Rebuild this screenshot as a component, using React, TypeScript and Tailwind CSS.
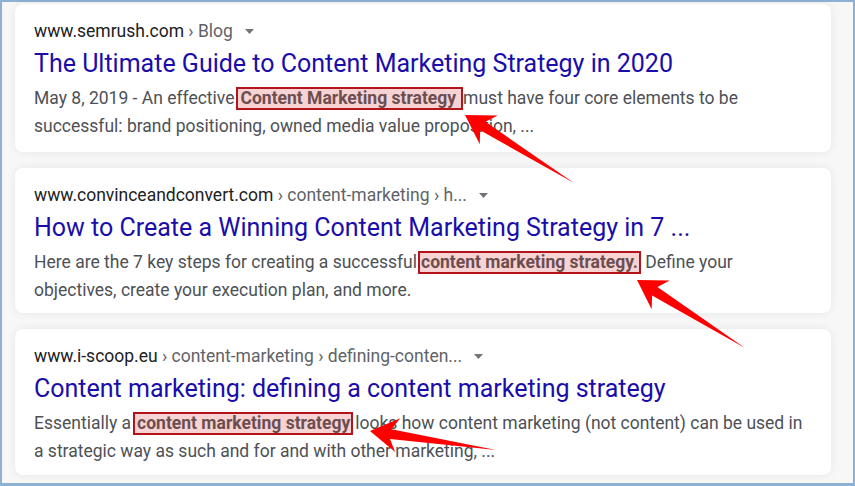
import React from "react";

type Pt = [number, number];

interface Result {
  domain: string;
  crumbs: string;
  title: string;
  before: string;
  mark: string;
  after: string;
  line2: string;
  height: string;
  markBox: string;
}

const results: Result[] = [
  {
    domain: "www.semrush.com",
    crumbs: " › Blog",
    title: "The Ultimate Guide to Content Marketing Strategy in 2020",
    before: "May 8, 2019 - An effective",
    mark: "Content Marketing strategy",
    after: "must have four core elements to be",
    line2: "successful: brand positioning, owned media value proposition, ...",
    height: "h-[148px]",
    markBox: "ml-[1px] pl-[3px] pr-[5px]",
  },
  {
    domain: "www.convinceandconvert.com",
    crumbs: " › content-marketing › h...",
    title: "How to Create a Winning Content Marketing Strategy in 7 ...",
    before: "Here are the 7 key steps for creating a successful",
    mark: "content marketing strategy.",
    after: " Define your",
    line2: "objectives, create your execution plan, and more.",
    height: "h-[145px]",
    markBox: "ml-[1px] pl-[1px] pr-[1px]",
  },
  {
    domain: "www.i-scoop.eu",
    crumbs: " › content-marketing › defining-conten...",
    title: "Content marketing: defining a content marketing strategy",
    before: "Essentially a",
    mark: "content marketing strategy",
    after: "looks how content marketing (not content) can be used in",
    line2: "a strategic way as such and for and with other marketing, ...",
    height: "h-[146px]",
    markBox: "ml-[2px] pl-[2px] pr-[1px] mr-[2px]",
  },
];

// annotation arrows: tip, tail
const arrows: [Pt, Pt][] = [
  [[465, 115], [574, 183]],
  [[637, 280], [745, 348]],
  [[370, 431], [496, 450]],
];

function arrowPoints(tip: Pt, tail: Pt, headLen = 28, headHalf = 17, shaftHalf = 5, barb = 7) {
  const dx = tail[0] - tip[0];
  const dy = tail[1] - tip[1];
  const len = Math.hypot(dx, dy);
  const ux = dx / len;
  const uy = dy / len;
  const nx = -uy;
  const ny = ux;
  const at = (a: number, b: number): Pt => [tip[0] + ux * a + nx * b, tip[1] + uy * a + ny * b];
  const pts: Pt[] = [
    tip,
    at(headLen, headHalf),
    at(headLen - barb, shaftHalf),
    tail,
    at(headLen - barb, -shaftHalf),
    at(headLen, -headHalf),
  ];
  return pts.map((p) => p.join(",")).join(" ");
}

const Caret = () => (
  <svg width="9" height="5" viewBox="0 0 9 5" className="ml-[12px] inline-block">
    <polygon points="0,0 9,0 4.5,5" fill="#70757a" />
  </svg>
);

const ResultCard = ({ r }: { r: Result }) => (
  <div className={`${r.height} shrink-0 rounded-[8px] bg-white px-[19px] pt-[17px] shadow-[0_0_10px_rgba(0,0,0,0.07)]`}>
    <div className="flex items-center text-[17.5px] leading-[20px]">
      <span className="text-[#202124]">{r.domain}</span>
      <span className="whitespace-pre text-[#5f6368]">{r.crumbs}</span>
      <Caret />
    </div>
    <div className="mt-[7px] whitespace-nowrap text-[25px] leading-[32px] text-[#1a0dab]">{r.title}</div>
    <div className="mt-[4px] text-[17.5px] leading-[28px] text-[#4d5156]">
      <div className="whitespace-pre">
        {r.before}
        <span
          className={`${r.markBox} inline-block h-[23px] border-2 border-[#b3141b] bg-[#f7d3d3] leading-[19px] font-bold text-[#6d4e50]`}
        >
          {r.mark}
        </span>
        {r.after}
      </div>
      <div className="whitespace-nowrap">{r.line2}</div>
    </div>
  </div>
);

export default function App() {
  return (
    <div className="relative h-[486px] w-[855px] overflow-hidden font-['Roboto','Liberation_Sans',sans-serif]">
      <div className="flex h-full w-full flex-col gap-[16px] border-2 border-b-[3px] border-[#8db0d5] bg-[#f7f7f7] pl-[13px] pr-[22px] pt-[2px]">
        {results.map((r) => (
          <ResultCard key={r.domain} r={r} />
        ))}
      </div>
      <svg className="pointer-events-none absolute left-0 top-0" width="855" height="486">
        {arrows.map(([tip, tail], i) => (
          <polygon key={i} points={arrowPoints(tip, tail)} fill="#ff0000" />
        ))}
      </svg>
    </div>
  );
}
